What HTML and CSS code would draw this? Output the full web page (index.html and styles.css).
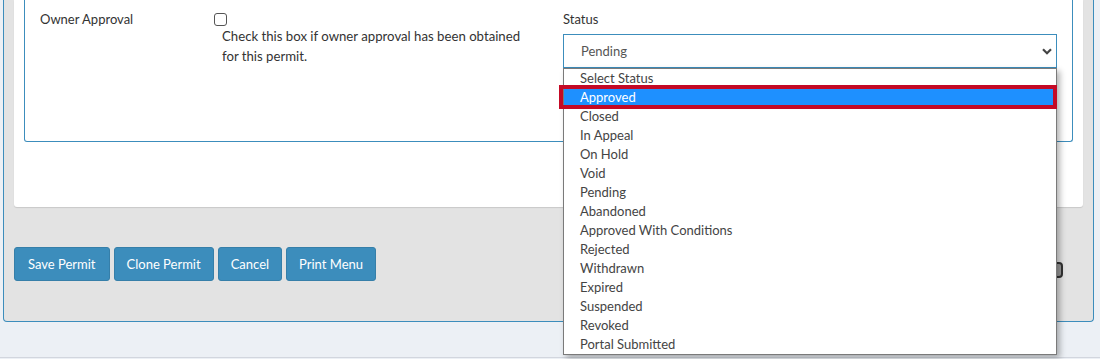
FILE: index.html
```html
<!DOCTYPE html>
<html lang="en">
<head>
<meta charset="utf-8">
<title>Permit</title>
<link rel="stylesheet" href="styles.css">
</head>
<body>
<div class="outer">
  <div class="panel">
    <div class="box">
      <div class="row">
        <div class="col-label"><span class="label">Owner Approval</span></div>
        <div class="col-check">
          <span class="checkbox"></span>
          <p class="help">Check this box if owner approval has been obtained for this permit.</p>
        </div>
        <div class="col-status">
          <div class="label">Status</div>
          <div class="select">
            <span>Pending</span>
            <svg class="chev" width="10" height="7" viewBox="0 0 10 7"><path d="M1 1.2 L5 5.2 L9 1.2" fill="none" stroke="#444" stroke-width="2.2"/></svg>
          </div>
          <ul class="dropdown">
            <li>Select Status</li>
            <li class="active">Approved<span class="mark"></span></li>
            <li>Closed</li>
            <li>In Appeal</li>
            <li>On Hold</li>
            <li>Void</li>
            <li>Pending</li>
            <li>Abandoned</li>
            <li>Approved With Conditions</li>
            <li>Rejected</li>
            <li>Withdrawn</li>
            <li>Expired</li>
            <li>Suspended</li>
            <li>Revoked</li>
            <li>Portal Submitted</li>
          </ul>
        </div>
      </div>
    </div>
  </div>
  <div class="actions">
    <button class="btn">Save Permit</button>
    <button class="btn">Clone Permit</button>
    <button class="btn">Cancel</button>
    <button class="btn">Print Menu</button>
    <span class="hidden-btn"></span>
  </div>
</div>
<div class="footer"></div>
</body>
</html>
```

FILE: styles.css
```css
* { box-sizing: border-box; }
html, body { margin: 0; padding: 0; }
body {
  background: #ecf0f5;
  font-family: Lato, "Open Sans", sans-serif;
  font-size: 13px;
  color: #333;
  width: 1100px;
  height: 359px;
  overflow: hidden;
}
.outer {
  margin-left: 3px;
  width: 1091px;
  border: 1px solid #3c8dbc;
  border-top: none;
  border-radius: 0 0 4px 4px;
  background: #e3e3e3;
  padding: 0 10px 40px 10px;
}
.panel {
  background: #fff;
  border-radius: 0 0 3px 3px;
  box-shadow: 0 1px 1px rgba(0, 0, 0, 0.12);
  padding: 0 10px 65px;
}
.box {
  border: 1px solid #3c8dbc;
  border-top: none;
  border-radius: 0 0 3px 3px;
  padding: 9px 15px 73px;
}
.row {
  display: flex;
  align-items: flex-start;
}
.label {
  display: block;
  line-height: 20px;
  color: #333;
}
.col-label { width: 167px; }
.col-check { width: 356px; }
.checkbox {
  display: block;
  width: 13px;
  height: 13px;
  margin: 4px 0 0 7px;
  border: 1px solid #555;
  border-radius: 3px;
  background: #fff;
}
.help {
  margin: 0 0 0 15px;
  width: 310px;
  line-height: 20px;
  font-size: 13.2px;
  color: #333;
}
.col-status {
  flex: 1;
  position: relative;
}
.select {
  margin-top: 5px;
  height: 34px;
  border: 1px solid #3c8dbc;
  display: flex;
  align-items: center;
  justify-content: space-between;
  padding: 0 4px 0 17px;
  color: #555;
}
.chev { display: block; }
.dropdown {
  position: absolute;
  top: 59px;
  left: 0;
  width: 494px;
  margin: 0;
  padding: 0;
  list-style: none;
  background: #fff;
  border: 1px solid #7a7a7a;
  box-shadow: 3px 3px 6px rgba(0, 0, 0, 0.3);
  z-index: 5;
}
.dropdown li {
  position: relative;
  height: 19px;
  line-height: 19px;
  padding-left: 16px;
  color: #444;
}
.dropdown li.active {
  background: #1e90ff;
  color: #fff;
}
.mark {
  position: absolute;
  top: -3px;
  bottom: -2px;
  left: -5px;
  right: -1px;
  border: 4px solid #c40a26;
}
.actions {
  display: flex;
  align-items: flex-start;
  gap: 4px;
  margin-top: 40px;
}
.btn {
  height: 34px;
  padding: 0 12px;
  background: #3c8dbc;
  border: 1px solid #367fa9;
  border-radius: 3px;
  color: #fff;
  font-family: inherit;
  font-size: 13px;
}
.btn:first-child { padding: 0 13px; }
.hidden-btn {
  margin: 15px 20px 0 auto;
  width: 30px;
  height: 16px;
  border: 2px solid #333;
  border-radius: 4px;
  background: #9a9a9a;
}
.footer {
  margin-top: 35px;
  border-top: 1px solid #d2d6de;
  height: 10px;
}
```
